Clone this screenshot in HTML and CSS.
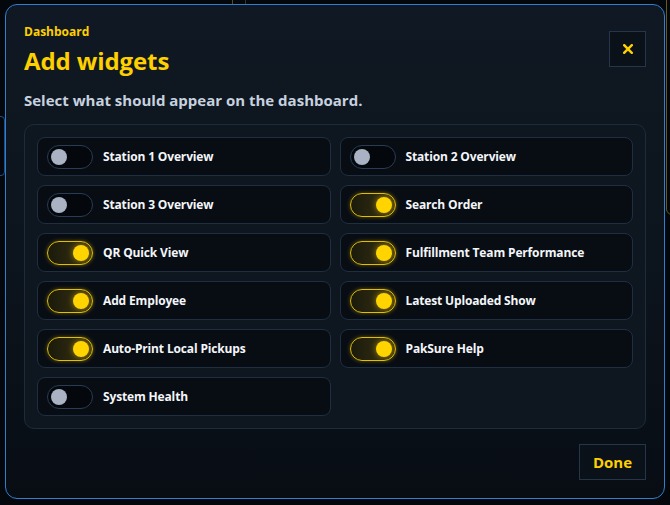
FILE: index.html
```html
<!DOCTYPE html>
<html lang="en">
<head>
    <meta charset="UTF-8">
    <meta name="viewport" content="width=device-width, initial-scale=1.0">
    <title>Add widgets</title>
    <link rel="stylesheet" href="styles.css">
</head>
<body>
    <!-- Page behind the dialog -->
    <div class="backdrop">
        <div class="bg-panel bg-panel-gold"></div>
        <div class="bg-panel bg-panel-top"></div>
        <div class="bg-panel bg-panel-blue"></div>
    </div>

    <!-- Widget picker dialog -->
    <div class="modal">
        <div class="modal-header">
            <div class="heading">
                <div class="eyebrow">Dashboard</div>
                <h1 class="modal-title">Add widgets</h1>
            </div>
            <button class="close-btn" type="button" aria-label="Close">
                <svg width="10" height="10" viewBox="0 0 10 10">
                    <path d="M1.2 1.2 L8.8 8.8 M8.8 1.2 L1.2 8.8" stroke="#ffd000" stroke-width="2.4" stroke-linecap="square"/>
                </svg>
            </button>
        </div>

        <p class="subtitle">Select what should appear on the dashboard.</p>

        <div class="widget-grid">
            <label class="widget">
                <span class="toggle"></span>
                <span class="widget-name">Station 1 Overview</span>
            </label>
            <label class="widget">
                <span class="toggle"></span>
                <span class="widget-name">Station 2 Overview</span>
            </label>
            <label class="widget">
                <span class="toggle"></span>
                <span class="widget-name">Station 3 Overview</span>
            </label>
            <label class="widget">
                <span class="toggle on"></span>
                <span class="widget-name">Search Order</span>
            </label>
            <label class="widget">
                <span class="toggle on"></span>
                <span class="widget-name">QR Quick View</span>
            </label>
            <label class="widget">
                <span class="toggle on"></span>
                <span class="widget-name">Fulfillment Team Performance</span>
            </label>
            <label class="widget">
                <span class="toggle on"></span>
                <span class="widget-name">Add Employee</span>
            </label>
            <label class="widget">
                <span class="toggle on"></span>
                <span class="widget-name">Latest Uploaded Show</span>
            </label>
            <label class="widget">
                <span class="toggle on"></span>
                <span class="widget-name">Auto-Print Local Pickups</span>
            </label>
            <label class="widget">
                <span class="toggle on"></span>
                <span class="widget-name">PakSure Help</span>
            </label>
            <label class="widget">
                <span class="toggle"></span>
                <span class="widget-name">System Health</span>
            </label>
        </div>

        <div class="modal-footer">
            <button class="done-btn" type="button">Done</button>
        </div>
    </div>
</body>
</html>
```

FILE: styles.css
```css
* {
    margin: 0;
    padding: 0;
    box-sizing: border-box;
}

body {
    font-family: "Open Sans", "Noto Sans", sans-serif;
    background: #04070b;
    width: 670px;
    height: 505px;
    overflow: hidden;
    position: relative;
    padding: 4px 6px 7px 5px;
}

/* Faint page content peeking around the dialog */
.backdrop {
    position: absolute;
    inset: 0;
    z-index: 0;
}

.bg-panel {
    position: absolute;
}

.bg-panel-gold {
    top: -20px;
    right: -20px;
    width: 24px;
    height: 235px;
    border: 1px solid #6b5a1a;
    border-radius: 6px;
}

.bg-panel-top {
    top: -20px;
    left: 232px;
    width: 14px;
    height: 30px;
    border-left: 1px solid #5a4c18;
    border-right: 1px solid #3a3320;
}

.bg-panel-blue {
    top: 116px;
    left: -20px;
    width: 25px;
    height: 60px;
    border: 1px solid #1d4f86;
    border-radius: 4px;
}

/* Dialog */
.modal {
    position: relative;
    z-index: 1;
    width: 660px;
    height: 495px;
    border: 1px solid #2f7fd0;
    border-radius: 12px;
    background: linear-gradient(180deg, #101923 0%, #0c141d 50%, #080d14 100%);
    padding: 18px;
    display: flex;
    flex-direction: column;
}

.modal-header {
    display: flex;
    justify-content: space-between;
    align-items: flex-start;
}

.eyebrow {
    color: #ffd000;
    font-size: 12px;
    font-weight: 700;
    line-height: 16px;
    padding-top: 1px;
}

.modal-title {
    color: #ffd000;
    font-size: 24px;
    font-weight: 700;
    line-height: 32px;
    margin-top: 5px;
    letter-spacing: -0.1px;
}

.close-btn {
    width: 37px;
    height: 36px;
    margin-top: 8px;
    background: #0a1119;
    border: 1px solid #26364a;
    display: flex;
    align-items: center;
    justify-content: center;
}

.subtitle {
    color: #c7d1df;
    font-size: 15px;
    font-weight: 700;
    line-height: 20px;
    margin-top: 13px;
}

/* Widget toggles */
.widget-grid {
    margin-top: 14px;
    border: 1px solid #1d2b3b;
    border-radius: 10px;
    background: #0e1620;
    padding: 12px;
    display: grid;
    grid-template-columns: 1fr 1fr;
    gap: 9px;
}

.widget {
    height: 39px;
    display: flex;
    align-items: center;
    gap: 10px;
    padding: 0 9px;
    background: #080d14;
    border: 1px solid #1f2e40;
    border-radius: 8px;
}

.widget-name {
    color: #f4f6fa;
    font-size: 12px;
    font-weight: 700;
    letter-spacing: -0.15px;
}

.toggle {
    position: relative;
    width: 46px;
    height: 24px;
    border-radius: 12px;
    border: 1px solid #2a3c55;
    background: #04080d;
    flex-shrink: 0;
}

.toggle::after {
    content: '';
    position: absolute;
    top: 3px;
    left: 3px;
    width: 16px;
    height: 16px;
    border-radius: 50%;
    background: #a9b3c3;
}

.toggle.on {
    border-color: #e3bf00;
    background: linear-gradient(90deg, #1a1a0c 0%, #3a3410 100%);
    box-shadow: 0 0 4px rgba(255, 208, 0, 0.35);
}

.toggle.on::after {
    left: 25px;
    background: #ffd400;
    box-shadow: 0 0 6px rgba(255, 212, 0, 0.55);
}

.modal-footer {
    margin-top: auto;
    display: flex;
    justify-content: flex-end;
}

.done-btn {
    width: 67px;
    height: 36px;
    background: #0a1119;
    border: 1px solid #26364a;
    color: #ffd000;
    font-family: "Open Sans", "Noto Sans", sans-serif;
    font-size: 15px;
    font-weight: 700;
}
```
